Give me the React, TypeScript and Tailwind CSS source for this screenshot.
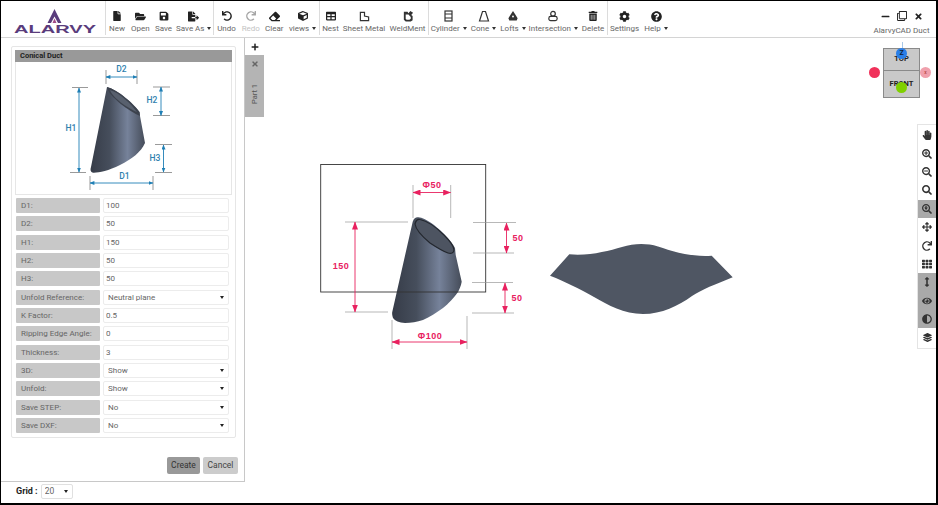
import React from 'react';
import {
  FaFile, FaFolderOpen, FaSave, FaFileExport, FaUndo, FaRedo, FaEraser, FaCube,
  FaTable, FaTrashAlt, FaCog, FaQuestionCircle, FaPlus, FaTimes, FaMinus,
  FaRegClone, FaSearchPlus, FaSearchMinus, FaSearch, FaArrowsAlt, FaTh,
  FaArrowsAltV, FaEye, FaAdjust, FaLayerGroup, FaHandPaper, FaSearchLocation,
} from 'react-icons/fa';

const font = "font-['Roboto','Liberation_Sans',sans-serif]";

function SheetIcon() {
  return (
    <svg width="11" height="11" viewBox="0 0 12 12" fill="none" stroke="#333" strokeWidth="1.3">
      <path d="M1.500 1.500h4.500v4l4.500 1v4h-9z" />
    </svg>
  );
}

function WeldIcon() {
  return (
    <svg width="12" height="12" viewBox="0 0 13 13" fill="#333">
      <path d="M2 2h4l1 1.500L9 1l3 2-2 2.500 1.500 1V11l-2 1.500H4l-2-2zM4 5v4.500l1 1h3l1.500-1V7.500L7 5z" fillRule="evenodd" />
    </svg>
  );
}

function CylinderIcon() {
  return (
    <svg width="11" height="12" viewBox="0 0 11 12" fill="none" stroke="#333" strokeWidth="1.2">
      <rect x="2" y="1" width="7" height="10" />
      <path d="M2 4h7M2 8h7" />
    </svg>
  );
}

function ConeIcon() {
  return (
    <svg width="12" height="12" viewBox="0 0 12 12" fill="none" stroke="#333" strokeWidth="1.2">
      <path d="M4.500 1.500h3l3 9.500h-9z" />
    </svg>
  );
}

function LoftIcon() {
  return (
    <svg width="12" height="12" viewBox="0 0 13 13" fill="#333">
      <path d="M6.500 1 9 5l2.500 4-1 2.500h-8l-1-2.500L4 5zM6.500 6a1 1 0 1 0 0 2 1 1 0 0 0 0-2z" fillRule="evenodd" />
    </svg>
  );
}

function IntersectIcon() {
  return (
    <svg width="12" height="12" viewBox="0 0 13 13" fill="none" stroke="#333" strokeWidth="1.3">
      <circle cx="6.500" cy="4" r="2.500" />
      <rect x="2" y="7" width="9" height="4.500" rx="2" />
    </svg>
  );
}

function Caret() {
  return <span className="inline-block ml-[3px] align-middle border-x-[2.5px] border-t-[3px] border-x-transparent border-t-[#333]" />;
}

type Tool = { label: string; icon: React.ReactNode; w: string; caret?: boolean; faded?: boolean };

const groups: { cls: string; tools: Tool[] }[] = [
  {
    cls: 'w-[108px]',
    tools: [
      { label: 'New', icon: <FaFile size={10} />, w: 'w-[22px]' },
      { label: 'Open', icon: <FaFolderOpen size={11} />, w: 'w-[24.5px]' },
      { label: 'Save', icon: <FaSave size={10} />, w: 'w-[22px]' },
      { label: 'Save As', icon: <FaFileExport size={11} />, w: 'w-[38.5px]', caret: true },
    ],
  },
  {
    cls: 'w-[106px]',
    tools: [
      { label: 'Undo', icon: <FaUndo size={10} />, w: 'w-[25px]' },
      { label: 'Redo', icon: <FaRedo size={10} />, w: 'w-[23.5px]', faded: true },
      { label: 'Clear', icon: <FaEraser size={11} />, w: 'w-[23.5px]' },
      { label: 'views', icon: <FaCube size={10} />, w: 'w-[33px]', caret: true },
    ],
  },
  {
    cls: 'w-[109px]',
    tools: [
      { label: 'Nest', icon: <FaTable size={10} />, w: 'w-[21px]' },
      { label: 'Sheet Metal', icon: <SheetIcon />, w: 'w-[46px]' },
      { label: 'WeldMent', icon: <WeldIcon />, w: 'w-[41px]' },
    ],
  },
  {
    cls: 'w-[179px]',
    tools: [
      { label: 'Cylinder', icon: <CylinderIcon />, w: 'w-[39.5px]', caret: true },
      { label: 'Cone', icon: <ConeIcon />, w: 'w-[30px]', caret: true },
      { label: 'Lofts', icon: <LoftIcon />, w: 'w-[29px]', caret: true },
      { label: 'Intersection', icon: <IntersectIcon />, w: 'w-[51.5px]', caret: true },
      { label: 'Delete', icon: <FaTrashAlt size={10} />, w: 'w-[28px]' },
    ],
  },
  {
    cls: 'w-[70px]',
    tools: [
      { label: 'Settings', icon: <FaCog size={11} />, w: 'w-[33px]' },
      { label: 'Help', icon: <FaQuestionCircle size={11} />, w: 'w-[30px]', caret: true },
    ],
  },
];

type Row = { label: string; value: string; select?: boolean };

const rows: Row[] = [
  { label: 'D1:', value: '100' },
  { label: 'D2:', value: '50' },
  { label: 'H1:', value: '150' },
  { label: 'H2:', value: '50' },
  { label: 'H3:', value: '50' },
  { label: 'Unfold Reference:', value: 'Neutral plane', select: true },
  { label: 'K Factor:', value: '0.5' },
  { label: 'Ripping Edge Angle:', value: '0' },
  { label: 'Thickness:', value: '3' },
  { label: '3D:', value: 'Show', select: true },
  { label: 'Unfold:', value: 'Show', select: true },
  { label: 'Save STEP:', value: 'No', select: true },
  { label: 'Save DXF:', value: 'No', select: true },
];

const sideTools = [
  { icon: <FaHandPaper size={10} /> },
  { icon: <FaSearchPlus size={10} /> },
  { icon: <FaSearchMinus size={10} /> },
  { icon: <FaSearch size={10} /> },
  { icon: <FaSearchLocation size={10} />, on: true },
  { icon: <FaArrowsAlt size={10} /> },
  { icon: <FaRedo size={10} /> },
  { icon: <FaTh size={10} /> },
  { icon: <FaArrowsAltV size={10} />, on: true },
  { icon: <FaEye size={10} />, on: true },
  { icon: <FaAdjust size={10} />, on: true },
  { icon: <FaLayerGroup size={9} /> },
];

function Logo() {
  return (
    <svg width="104" height="36" viewBox="0 0 104 36" className="shrink-0">
      <path d="M53.500 8 60.500 22H57L53.500 15.500 50 22H46.500z" fill="#5a3c7c" />
      <path d="M53.500 17.500 55.500 22H51.500z" fill="#a24a86" />
      <text x="13" y="32" fontFamily="Liberation Sans" fontWeight="700" fontSize="11" fill="#5a3c7c" textLength="82" lengthAdjust="spacingAndGlyphs">ALARVY</text>
    </svg>
  );
}

function Toolbar() {
  return (
    <div className="flex h-[37px] shrink-0 border-b border-[#d4d4d4]">
      <Logo />
      {groups.map((g, i) => (
        <div key={i} className={`flex h-[34px] shrink-0 border-l border-[#dcdcdc] ${g.cls}`}>
          {g.tools.map(t => (
            <div key={t.label} className={`flex flex-col items-center pt-[8px] shrink-0 ${t.w} ${t.faded ? 'opacity-40' : ''}`}>
              <div className="h-[14px] flex items-center text-[#222]">{t.icon}</div>
              <div className="text-[8px] leading-[11px] text-[#666] whitespace-nowrap">
                {t.label}
                {t.caret && <Caret />}
              </div>
            </div>
          ))}
        </div>
      ))}
      <div className="flex-1" />
      <div className="flex flex-col items-center w-[60px] pr-[9px] pt-[9px] shrink-0">
        <div className="flex items-center gap-[7px] h-[12px] text-[#222]">
          <FaMinus size={9} />
          <FaRegClone size={10} />
          <FaTimes size={9} />
        </div>
        <div className="text-[8px] leading-[11px] text-[#666] mt-[3px] whitespace-nowrap">AlarvyCAD Duct</div>
      </div>
    </div>
  );
}

function Arrow({ x1, y1, x2, y2, color }: { x1: number; y1: number; x2: number; y2: number; color: string }) {
  const id = color === '#e8215f' ? 'arrRed' : 'arrBlue';
  return <line x1={x1} y1={y1} x2={x2} y2={y2} stroke={color} strokeWidth="0.9" markerStart={`url(#${id})`} markerEnd={`url(#${id})`} />;
}

function ArrowDefs() {
  return (
    <>
      <marker id="arrRed" viewBox="0 0 8 6" refX="7.500" refY="3" markerWidth="8" markerHeight="6" orient="auto-start-reverse" markerUnits="userSpaceOnUse">
        <path d="M0 0 8 3 0 6z" fill="#e8215f" />
      </marker>
      <marker id="arrBlue" viewBox="0 0 6 5" refX="5.500" refY="2.500" markerWidth="5" markerHeight="4" orient="auto-start-reverse" markerUnits="userSpaceOnUse">
        <path d="M0 0 6 2.500 0 5z" fill="#1f7fb5" />
      </marker>
      <linearGradient id="ductBody" x1="0" y1="0" x2="1" y2="0">
        <stop offset="0" stopColor="#363c48" />
        <stop offset="0.35" stopColor="#464e5c" />
        <stop offset="0.68" stopColor="#76829a" />
        <stop offset="1" stopColor="#454c59" />
      </linearGradient>
    </>
  );
}

function DuctDiagram() {
  const blue = '#1f7fb5';
  const ext = '#555';
  return (
    <svg width="214" height="132" viewBox="16 62 214 132" className="block">
      <defs><ArrowDefs /></defs>
      <path d="M107 87C118 90 134 104 139.500 112L140 116 145 143C141 152 132 159 120 165 108 171 98 173 93 172.700 90.500 172 90 170 91 167z" fill="url(#ductBody)" />
      <path d="M107 87C118 90 134 104 139.500 112L140 116C130 112 108 96 107 87z" fill="#3c424d" />
      <path d="M110 90C120 93 131 104 137 112 127 108 112 97 110 90z" fill="#58606e" />
      <g stroke={ext} strokeWidth="0.6">
        <line x1="106" y1="70" x2="106" y2="84" />
        <line x1="137" y1="70" x2="137" y2="84" />
        <line x1="153" y1="87" x2="170" y2="87" />
        <line x1="153" y1="115.500" x2="170" y2="115.500" />
        <line x1="72" y1="87.500" x2="88" y2="87.500" />
        <line x1="70" y1="172.500" x2="86" y2="172.500" />
        <line x1="155" y1="144.500" x2="172" y2="144.500" />
        <line x1="155" y1="172.500" x2="172" y2="172.500" />
        <line x1="90" y1="176" x2="90" y2="190" />
        <line x1="153" y1="176" x2="153" y2="190" />
      </g>
      <Arrow x1={106} y1={77} x2={137} y2={77} color={blue} />
      <Arrow x1={161} y1={87} x2={161} y2={115.500} color={blue} />
      <Arrow x1={79} y1={88} x2={79} y2={172} color={blue} />
      <Arrow x1={163.500} y1={145} x2={163.500} y2={172} color={blue} />
      <Arrow x1={90} y1={183} x2={153} y2={183} color={blue} />
      <g fill="#2f7fae" fontFamily="Roboto" fontSize="8.500" fontWeight="500" textAnchor="middle">
        <text x="121.500" y="72">D2</text>
        <text x="152" y="103">H2</text>
        <text x="71" y="131">H1</text>
        <text x="155" y="161">H3</text>
        <text x="124.500" y="179">D1</text>
      </g>
    </svg>
  );
}

function Field({ row }: { row: Row }) {
  return (
    <div className="flex h-[15px] gap-[3px] mb-[3.33px]">
      <div className="w-[84px] shrink-0 bg-[#c8c8c8] rounded-[1px] pl-[5px] text-[8px] leading-[15px] text-[#666] whitespace-nowrap">{row.label}</div>
      {row.select ? (
        <div className="relative w-[126px]">
          <select defaultValue={row.value} className="block appearance-none w-full h-[15px] bg-white border border-[#ececec] rounded-[2px] pl-[4px] text-[8px] leading-[13px] text-[#666] outline-none">
            <option>{row.value}</option>
          </select>
          <span className="absolute right-[5px] top-[6px] border-x-[2.5px] border-t-[3.5px] border-x-transparent border-t-[#222]" />
        </div>
      ) : (
        <input defaultValue={row.value} className="block w-[126px] h-[15px] bg-white border border-[#ececec] rounded-[2px] pl-[2px] text-[8px] text-[#666] outline-none" />
      )}
    </div>
  );
}

function LeftPanel() {
  return (
    <div className="flex flex-col h-[444px] shrink-0 border-r border-b border-[#c8c8c8] pt-[8px] pl-[10px]">
      <div className="w-[225px] h-[392px] shrink-0 border border-[#e6e6e6] rounded-[2px] p-[3px]">
        <div className="h-[12px] bg-[#999] pl-[5px] text-[7.5px] leading-[12px] font-bold text-[#222]">Conical Duct</div>
        <div className="h-[133px] border border-t-0 border-[#e6e6e6] overflow-hidden">
          <DuctDiagram />
        </div>
        <div className="pt-[3px] pl-[1px]">
          {rows.map((r, i) => <Field key={i} row={r} />)}
        </div>
      </div>
      <div className="flex justify-end gap-[3px] mt-[19px] pr-[6px]">
        <button className="w-[33px] h-[17px] bg-[#999] rounded-[2px] text-[8.5px] text-[#333]">Create</button>
        <button className="w-[35px] h-[17px] bg-[#ccc] rounded-[2px] text-[8.5px] text-[#444]">Cancel</button>
      </div>
    </div>
  );
}

function GridPicker() {
  return (
    <div className="flex items-center gap-[3px] pl-[15px] pt-[2px]">
      <span className="text-[9px] font-bold text-[#222] whitespace-nowrap">Grid :</span>
      <div className="relative w-[32px]">
        <select defaultValue="20" className="block appearance-none w-full h-[15px] bg-white border border-[#e0e0e0] rounded-[2px] pl-[3px] text-[8.5px] text-[#666] outline-none">
          <option>20</option>
        </select>
        <span className="absolute right-[5px] top-[6px] border-x-[2.5px] border-t-[3.5px] border-x-transparent border-t-[#222]" />
      </div>
    </div>
  );
}

function TabStrip() {
  return (
    <div className="flex flex-col w-[19px] shrink-0">
      <div className="h-[17px] flex items-center justify-center text-[#222]">
        <FaPlus size={8} />
      </div>
      <div className="h-[62px] bg-[#b4b4b4] flex flex-col items-center pt-[5px] text-[#666]">
        <FaTimes size={8} />
        <div className="mt-[16px] text-[7.5px] leading-[10px] text-[#555] [writing-mode:vertical-rl] rotate-180">Part 1</div>
      </div>
    </div>
  );
}

function Drawing() {
  const red = '#e8215f';
  const ext = '#9a9a9a';
  return (
    <svg className="absolute inset-0" width="672" height="464" viewBox="264 38 672 464">
      <defs><ArrowDefs /></defs>
      {/* unfolded pattern */}
      <path d="M550 275.700 569.300 254.300C590 256 608 251 622 247 634 243.500 646 243 658 246.500 672 251 688 257 711.700 255.700L732.700 277.300C714 285 703 289 692 296 678 306 662 314 643 314 624 314 608 305 594 297 578 288 566 282 550 275.700z" fill="#4f5663" />

      {/* 3D duct */}
      <path d="M412.700 221.700C414 218 416 217 418.300 217.300 426 218 436 226 443 233 449 239 453 244 455 248L455.700 255 461.700 281.700C461 286 459 290 458 292 453 299 449 303 443 308 436 313 430 317 423 320 417 322 411 323 405 323 399 322.500 395 321 393 318 392 315 392 313 392.300 311.700z" fill="url(#ductBody)" />
      <path d="M415 224C416 220 418 219 420 219.500 428 221 438 229 444 235 450 241 454 246 454 250 454 253 451 254 448 253 442 251 436 247 430 243 424 238 416 231 415 224z" fill="#4d5461" stroke="#23272e" strokeWidth="1.2" />
      <rect x="320.700" y="164.500" width="165" height="127.500" fill="none" stroke="#333" strokeWidth="0.9" />

      {/* dimensions */}
      <g stroke={ext} strokeWidth="0.7">
        <line x1="413" y1="185" x2="413" y2="218" />
        <line x1="450.700" y1="185" x2="450.700" y2="218" />
        <line x1="345" y1="222" x2="408" y2="222" />
        <line x1="345" y1="312" x2="388" y2="312" />
        <line x1="473" y1="222.500" x2="516" y2="222.500" />
        <line x1="473" y1="253" x2="514" y2="253" />
        <line x1="472" y1="282.500" x2="513" y2="282.500" />
        <line x1="472" y1="313" x2="514" y2="313" />
        <line x1="392" y1="320" x2="392" y2="349" />
        <line x1="467" y1="316" x2="467" y2="349" />
      </g>
      <Arrow x1={413} y1={192.500} x2={450.700} y2={192.500} color={red} />
      <Arrow x1={355} y1={222} x2={355} y2={312} color={red} />
      <Arrow x1={506.500} y1={223} x2={506.500} y2={253} color={red} />
      <Arrow x1={505} y1={283} x2={505} y2={313} color={red} />
      <Arrow x1={392} y1={342} x2={467} y2={342} color={red} />
      <g fill={red} fontFamily="Liberation Sans" fontSize="9" fontWeight="700" textAnchor="middle" letterSpacing="0.5">
        <text x="432" y="188">Φ50</text>
        <text x="341" y="269">150</text>
        <text x="518" y="241">50</text>
        <text x="517" y="301">50</text>
        <text x="430" y="339">Φ100</text>
      </g>
    </svg>
  );
}

function ViewCube() {
  return (
    <div className="absolute left-[611px] top-0 w-[70px] h-[60px]">
      <div className="absolute left-[27px] top-[4px] w-[1px] h-[7px] bg-[#a8c8e8]" />
      <div className="absolute left-[8px] top-[10px] w-[37px] h-[50px] flex flex-col border border-[#8a8a8a] bg-[#c9c9c9]">
        <div className="h-[22px] border-b border-[#8a8a8a] text-center text-[7.5px] font-bold leading-[6px] pt-[7px] text-[#222]">TOP</div>
        <div className="flex-1 text-center text-[7.5px] font-bold text-[#222] pt-[9px] leading-[8px]">FRONT</div>
      </div>
      <div className="absolute left-[21px] top-[10px] w-[11px] h-[11px] rounded-full bg-[#2a7fe8] text-center text-[7px] font-bold leading-[11px] text-[#123]">Z</div>
      <div className="absolute left-[21px] top-[44px] w-[11px] h-[11px] rounded-full bg-[#7fd000]" />
      <div className="absolute left-[-6px] top-[29px] w-[11px] h-[11px] rounded-full bg-[#f0315a]" />
      <div className="absolute left-[45px] top-[29px] w-[11px] h-[11px] rounded-full bg-[#f0a0ac] text-center text-[5px] leading-[11px] text-[#a33]">x</div>
    </div>
  );
}

function SideTools() {
  return (
    <div className="absolute left-[653px] top-[86px] w-[19px] flex flex-col border border-r-0 border-[#e4e4e4] bg-white py-[1px]">
      {sideTools.map((t, i) => (
        <div key={i} className={`h-[18.4px] flex items-center justify-center text-[#333] ${t.on ? 'bg-[#a9a9a9]' : ''}`}>
          {t.icon}
        </div>
      ))}
    </div>
  );
}

export default function App() {
  return (
    <div className={`w-[938px] h-[505px] flex flex-col overflow-hidden bg-white border-t border-l border-r-2 border-b-2 border-black ${font}`}>
      <Toolbar />
      <div className="flex flex-1 min-h-0">
        <div className="flex flex-col w-[244px] shrink-0">
          <LeftPanel />
          <GridPicker />
        </div>
        <TabStrip />
        <div className="relative flex-1">
          <Drawing />
          <ViewCube />
          <SideTools />
        </div>
      </div>
    </div>
  );
}
